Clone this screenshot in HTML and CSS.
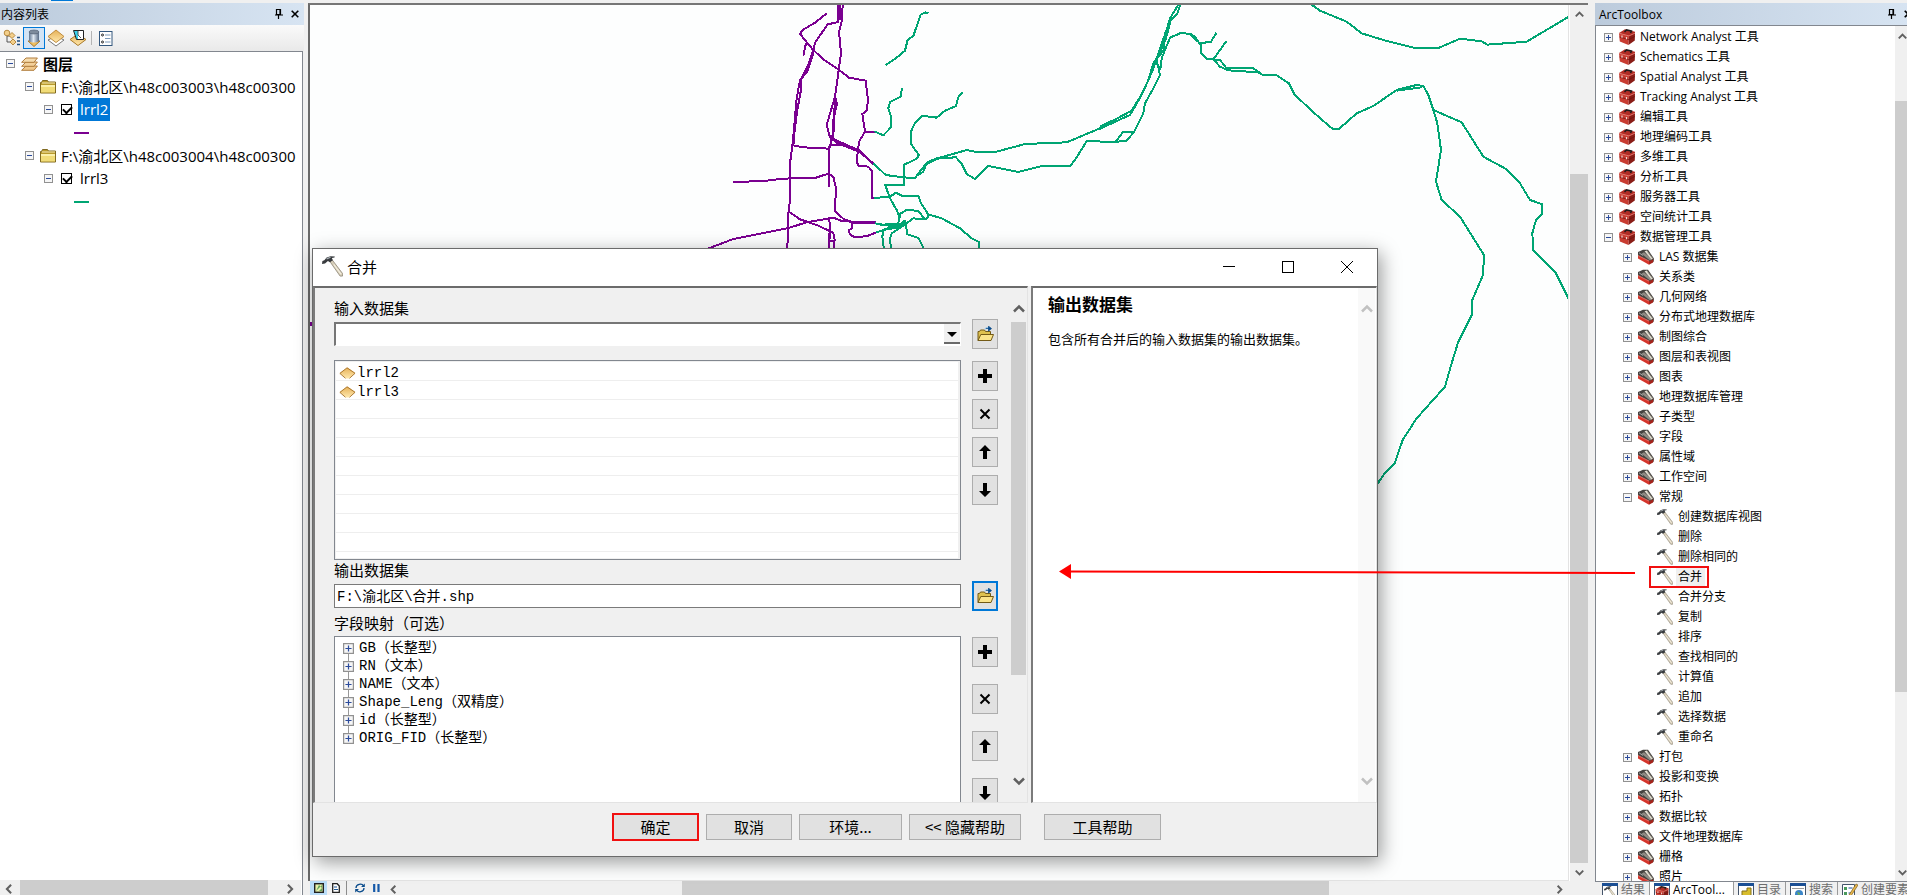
FILE: index.html
```html
<!DOCTYPE html>
<html lang="zh-CN">
<head>
  <meta charset="UTF-8">
  <meta name="viewport" content="width=device-width, initial-scale=1">
  <title>合并</title>
  <link rel="stylesheet" href="styles.css">
</head>

<body>
  <!-- shared icons -->
  <svg class="sprite" aria-hidden="true">
    <defs>
      <linearGradient id="gold" x1="0" y1="0" x2="0" y2="1">
        <stop offset="0" stop-color="#e6b056"/><stop offset="1" stop-color="#ffe9ae"/>
      </linearGradient>
      <linearGradient id="steel" x1="0" y1="0" x2="1" y2="0">
        <stop offset="0" stop-color="#5f7590"/><stop offset=".45" stop-color="#dfe8f2"/><stop offset="1" stop-color="#566a84"/>
      </linearGradient>
    </defs>
    <symbol id="i-plus" viewBox="0 0 9 9">
      <rect x=".5" y=".5" width="8" height="8" fill="#f6f6f6" stroke="#919191"/>
      <path d="M2 4.500h5M4.500 2v5" stroke="#2b4b9b"/>
    </symbol>
    <symbol id="i-minus" viewBox="0 0 9 9">
      <rect x=".5" y=".5" width="8" height="8" fill="#f6f6f6" stroke="#919191"/>
      <path d="M2 4.500h5" stroke="#2b4b9b"/>
    </symbol>
    <symbol id="i-toolbox" viewBox="0 0 16 16">
      <path d="M0 4 10 6.500 9.500 16 .8 12.500z" fill="#c93c31"/>
      <path d="M10 6.500 16 4 15.800 11.500 9.500 16z" fill="#8a1d17"/>
      <path d="M0 4 6 .3 16 2.800 16 4.200 10 7z" fill="#b02c24"/>
      <path d="M0 4.300 10 6.900 16 4.200" fill="none" stroke="#e98076" stroke-width=".8"/>
      <path d="M.5 8 9.800 10.600 15.800 7.500" fill="none" stroke="#6e1410" stroke-width=".8"/>
      <path d="M5.500 3 7.500.9 12.500 2 11.500 4" fill="none" stroke="#1c1c1c" stroke-width="1.500"/>
      <path d="M3 6.500v2.200M7.500 8v2.200" stroke="#f1d9d3" stroke-width="1.200"/>
    </symbol>
    <symbol id="i-toolset" viewBox="0 0 16 16">
      <path d="M0 3 5 .8 10 .8 16 9.500 15.500 13 11 14 0 7z" fill="#45423f"/>
      <path d="M3.500 4.800 6 3.200 14 10 12 11.500z" fill="#8f8b84"/>
      <path d="M6.500 2.200 9 1.500 15 9.500 13.500 10.500z" fill="#e4dfd2"/>
      <path d="M9.500 2.500 14.800 9.500" stroke="#6a645b" stroke-width=".8"/>
      <path d="M1 3.800 5 6.500" stroke="#bbb" stroke-width=".8"/>
      <path d="M0 6.500 11 12 11 15.800 0 9.500z" fill="#d5352b"/>
      <path d="M11 12 15.500 10.500 15 13.500 11 15.800z" fill="#a5241c"/>
      <path d="M0 6.500 11 12" stroke="#ee8074" stroke-width=".8"/>
    </symbol>
    <symbol id="i-hammer" viewBox="0 0 16 16">
      <path d="M6 4.200 7.800 3 15.800 13.500 15.600 15.300 13.800 15.300z" fill="#d8cfba" stroke="#8b8373" stroke-width=".6"/>
      <path d="M9 6.500 14.500 13.800" stroke="#f6f1e2" stroke-width=".8"/>
      <path d="M0 6 .3 3.800 1.800 3.200 3.500 1.200 6.500.2 9.800.4 9.500 1.200 7.500 1.600 8.300 3.200 6 4.800 4.500 3.800 2.300 5.800z" fill="#383b3e"/>
      <path d="M3.500 2.200 6.500 1" stroke="#a9b0b6" stroke-width=".9"/>
    </symbol>
    <symbol id="i-folder" viewBox="0 0 16 14">
      <path d="M.5 2.500h1l1-2h5l1 1.500h7v11H.5z" fill="#b99a2c" stroke="#806a22"/>
      <path d="M1 5h14v7.500H1z" fill="#f1dc78"/>
      <path d="M1 5h14v2H1z" fill="#fbf0ac"/>
      <path d="M2 3h13" stroke="#f7ecb8"/>
    </symbol>
    <symbol id="i-open" viewBox="0 0 17 16">
      <path d="M1 14.500V5.500h1.500l1-1.500h4l1 1.500h5V8" fill="#dfc14e" stroke="#735a16"/>
      <path d="M1 14.500 3.800 8.500h12.700L14 14.500z" fill="#fbe48a" stroke="#735a16"/>
      <path d="M8 3.500c0-2 2-2 4-1.500" fill="none" stroke="#7db7e4"/>
      <path d="M9 2.500h4M11.500.2 14.500 2.600 11.500 5z" fill="#0b4c8c" stroke="#0b4c8c" stroke-width=".8"/>
    </symbol>
    <symbol id="i-diamond" viewBox="0 0 17 12">
      <path d="M8.500.5 16.500 6 10 11.500H7L.5 6z" fill="url(#gold)"/>
      <path d="M.8 6.500 8 .8 16 6.300 10.500 11.300M1 6.500 6.500 11.300" fill="none" stroke="#a57029" stroke-width=".9"/>
    </symbol>
    <symbol id="i-add" viewBox="0 0 14 14"><path d="M5 0h4v5h5v4H9v5H5V9H0V5h5z"/></symbol>
    <symbol id="i-del" viewBox="0 0 14 14"><path d="M2.500 2.500 11.500 11.500M11.500 2.500 2.500 11.500" stroke="#000" stroke-width="2"/></symbol>
    <symbol id="i-up" viewBox="0 0 14 14"><path d="M7 0 13 6H9v8H5V6H1z"/></symbol>
    <symbol id="i-down" viewBox="0 0 14 14"><path d="M7 14 1 8h4V0h4v8h4z"/></symbol>
    <symbol id="i-chev-up" viewBox="0 0 12 12"><path d="M1 8.500 6 3.500 11 8.500" fill="none" stroke="currentColor" stroke-width="2.500"/></symbol>
    <symbol id="i-chev-down" viewBox="0 0 12 12"><path d="M1 3.500 6 8.500 11 3.500" fill="none" stroke="currentColor" stroke-width="2.500"/></symbol>
    <symbol id="i-chev-left" viewBox="0 0 12 12"><path d="M8.500 1 3.500 6 8.500 11" fill="none" stroke="currentColor" stroke-width="2.500"/></symbol>
    <symbol id="i-chev-right" viewBox="0 0 12 12"><path d="M3.500 1 8.500 6 3.500 11" fill="none" stroke="currentColor" stroke-width="2.500"/></symbol>
    <symbol id="i-pin" viewBox="0 0 8 10"><path d="M1.500.5h4v5h-4zM5 .5v5M0 6h8M3.500 6v4" fill="none" stroke="#000" stroke-width="1.200"/></symbol>
    <symbol id="i-close" viewBox="0 0 8 8"><path d="M.7.7 7.300 7.300M7.300.7.7 7.300" stroke="#000" stroke-width="1.600"/></symbol>
  </svg>

  <div class="topstrip"><span class="topmark"></span></div>

  <div class="workspace">
    <aside class="contents">
      <header class="panel-title">
        <h2>内容列表</h2>
        <button type="button" aria-label="自动隐藏"><svg width="8" height="10"><use href="#i-pin"/></svg></button>
        <button type="button" aria-label="关闭"><svg width="8" height="8"><use href="#i-close"/></svg></button>
      </header>
      <div class="contents-tools">
        <button type="button" aria-label="按绘制顺序列出">
          <svg width="18" height="18" viewBox="0 0 18 18">
            <path d="M4 4v9h6M4 7h6" fill="none" stroke="#555"/>
            <circle cx="4" cy="4" r="2.800" fill="#f3cf8a" stroke="#b88a40"/>
            <path d="M9 3.500 12 6.500 9 9.500 6 6.500zM10 10 13 13 10 16 7 13z" fill="#f3cf8a" stroke="#b88a40"/>
            <path d="M14 8.500h3M14 12h3M14 15.500h3" stroke="#1f4d80" stroke-width="1.500"/>
          </svg>
        </button>
        <button type="button" class="on" aria-label="按源列出">
          <svg width="16" height="18" viewBox="0 0 16 18">
            <path d="M2 12h12l-6 5.500z" fill="#f0c060" stroke="#a87828"/>
            <path d="M3 3v9c2 2 8 2 10 0V3z" fill="url(#steel)"/>
            <ellipse cx="8" cy="3" rx="5" ry="2" fill="#7d8b9c" stroke="#566478" stroke-width=".7"/>
          </svg>
        </button>
        <button type="button" aria-label="按可见性列出">
          <svg width="18" height="18" viewBox="0 0 18 18">
            <path d="M1 11 9 17 17 11 9 7z" fill="#fff" stroke="#777"/>
            <path d="M9 1 17 7.500 9 13.500 1 7.500z" fill="url(#gold)" stroke="#c08c3c"/>
          </svg>
        </button>
        <button type="button" aria-label="按选择列出">
          <svg width="18" height="18" viewBox="0 0 18 18">
            <path d="M1 10.500 9 5l8 5.500-8 6z" fill="url(#gold)" stroke="#a87828"/>
            <path d="M4.500 1.500h10v9h-7z" fill="#39d0ea" stroke="#222"/>
            <path d="M9 2h5v8H9z" fill="#fff"/><path d="M9 2v4l3 3" fill="none" stroke="#555"/>
          </svg>
        </button>
        <span class="divider"></span>
        <button type="button" aria-label="选项">
          <svg width="14" height="15" viewBox="0 0 14 15">
            <rect x=".5" y=".5" width="12.500" height="14" fill="#fff" stroke="#34587e"/>
            <path d="M6 4h5.500M6 7.500h5.500M6 11h5.500" stroke="#7d99b8"/>
            <circle cx="3.500" cy="4" r="1" fill="none" stroke="#222"/><circle cx="3.500" cy="11" r="1" fill="none" stroke="#222"/>
          </svg>
        </button>
      </div>
      <div class="contents-body">
        <ul class="layers">
          <li class="group"><svg width="9" height="9"><use href="#i-minus"/></svg>
            <svg width="17" height="14" viewBox="0 0 17 14">
              <path d="M.6 13.300 5 9h11.400L13 13.300z" fill="#f0c88c" stroke="#b17d3c"/>
              <path d="M.6 9.300 5 5h11.400L13 9.300z" fill="#f3d09a" stroke="#b17d3c"/>
              <path d="M.6 5.300 5 1h11.400L13 5.300z" fill="#f6dcae" stroke="#b17d3c"/>
            </svg><span>图层</span></li>
          <li class="source"><svg width="9" height="9"><use href="#i-minus"/></svg><svg width="16" height="14"><use href="#i-folder"/></svg><span>F:\渝北区\h48c003003\h48c00300</span></li>
          <li class="layer"><svg width="9" height="9"><use href="#i-minus"/></svg><input type="checkbox" id="lrrl2" checked><label class="selected" for="lrrl2">lrrl2</label></li>
          <li class="legend"><span class="line purple"></span></li>
          <li class="source"><svg width="9" height="9"><use href="#i-minus"/></svg><svg width="16" height="14"><use href="#i-folder"/></svg><span>F:\渝北区\h48c003004\h48c00300</span></li>
          <li class="layer"><svg width="9" height="9"><use href="#i-minus"/></svg><input type="checkbox" id="lrrl3" checked><label for="lrrl3">lrrl3</label></li>
          <li class="legend"><span class="line green"></span></li>
        </ul>
        <div class="hscroll">
          <svg width="10" height="10"><use href="#i-chev-left"/></svg>
          <span class="thumb"></span>
          <svg width="10" height="10"><use href="#i-chev-right"/></svg>
        </div>
      </div>
    </aside>

    <main class="map">
      <div class="map-view">
        <svg class="roads" viewBox="310 5 1258 875" preserveAspectRatio="xMinYMin slice">
          <path d="M310 324h3" stroke="#7a0090" stroke-width="4"/>
          <g class="purple-roads" transform="translate(700 0) scale(.33333)">
            <path d="M415 14V66L383 73 345 128 337 170 322 215 300 240 290 295 278 430 270 490 270 600 265 640 262 750"/>
            <path d="M420 14V60M428 14 426 60 417 95 423 160 412 240 405 290 400 410 388 440 386 562"/>
            <path d="M380 40 345 68 308 90 300 102 338 148 370 178 415 208 447 233 497 242 504 300 500 332 487 342 495 395 477 425 470 485 475 497 505 500 515 512 515 594 525 594"/>
            <path d="M495 395H525M318 130 310 167M340 150 325 195 302 240 302 275 292 330 283 400 280 438"/>
            <path d="M405 290 380 375 390 412 410 428 477 455 522 492"/>
            <path d="M405 290 411 310 400 360 398 415 435 433 480 452 520 492M392 405 392 435 430 435"/>
            <path d="M280 436 310 442 388 446 392 432M100 547 215 541 240 536 345 534 385 521 400 530 407 560 406 635 432 658 455 665 527 667"/>
            <path d="M268 636 300 658 350 675 400 698 404 720 400 748M18 748 100 717 265 684 320 667 400 653 425 663 455 665M455 670H527"/>
            <path d="M388 655 390 700 386 748M388 700V722H402V745M455 667 457 685 447 690 449 703 463 711 500 709 527 698"/>
          </g>
          <g class="green-roads" transform="translate(700 0) scale(.33333)">
            <path d="M685 40 677 37 662 44 640 108 623 120 615 152 590 173 557 195M606 265 602 290 570 306 565 325 573 350 573 382 550 406 523 394"/>
            <path d="M788 275 775 292 768 318 735 332 710 353 667 347 645 368 633 395 633 432 657 465 650 476 613 494 613 554 556 556 570 595 590 630 600 655"/>
            <path d="M520 490 557 525 610 532 645 534 675 495 720 473 800 450 830 456 890 455 975 432 1100 427 1200 385"/>
            <path d="M650 527 670 515 680 488 710 475 768 472 785 492 800 522 825 537 865 498 955 516 1025 498 1110 498 1125 480 1160 424 1200 423"/>
            <path d="M523 594 570 590 588 578 605 587 655 588 663 610 682 638 685 652 675 658 655 633 620 629 600 642 595 670 550 692 547 710 552 748"/>
            <path d="M682 642 725 655 780 685 815 715 838 727V748M675 658 640 655 605 680 575 700 570 715 573 748M615 660 622 703 655 714 673 748"/>
            <path d="M525 670 560 676 600 680 615 660M527 698 555 688 590 684 610 665M540 674 600 672"/>
          </g>
          <g class="green-roads" transform="translate(1100 0) scale(.33333)">
            <path d="M235 14 210 55 200 90 180 145 158 210 130 275 95 332 50 356 0 380M241 14 232 40 212 62 198 115 170 180 180 225 160 265 135 310 130 340 102 396 78 424 0 426"/>
            <path d="M195 95 192 150 160 190 145 240 122 290 90 345 0 386M48 424 68 397H102M170 190 182 210M182 205 185 175 210 113 245 98 270 103 300 130 333 125 349 99"/>
            <path d="M270 101 285 110 302 135 303 160 320 177 340 178 380 122M340 178 360 180 380 205 460 205 487 224 530 226 567 250 583 283 620 318 655 350 697 386 718 386 770 340 820 318 890 270 950 255 970 258 985 285 1000 330 1012 370 1023 450 1008 545 1025 600 1080 650 1152 765 1149 825 1117 900 1115 945 1075 1025 1055 1090 1035 1160 950 1255 908 1320 885 1388 855 1418 830 1455"/>
            <path d="M340 178 360 200 385 211 475 217 487 224M890 272 965 262"/>
            <path d="M1000 330 1085 367 1150 470 1220 508 1260 550 1290 600 1325 612 1327 640 1308 660 1297 700 1300 750 1365 815 1405 895"/>
            <path d="M635 14 660 32 740 65 785 100 850 120 945 144H1015L1080 116 1145 124 1162 134 1280 125 1405 51"/>
          </g>
        </svg>
        <div class="vscroll">
          <svg width="9" height="9"><use href="#i-chev-up"/></svg>
          <div class="track"><span class="thumb"></span></div>
          <svg width="9" height="9"><use href="#i-chev-down"/></svg>
        </div>
      </div>
      <div class="map-bar">
        <button type="button" class="on" aria-label="数据视图"><svg width="10" height="10" viewBox="0 0 10 10"><rect x=".7" y=".7" width="8.600" height="8.600" fill="#e7f0a8" stroke="#222" stroke-width="1.400"/><path d="M2 8 5 2 8 5V2M5 8 8 5v3z" fill="#5fa35a"/></svg></button>
        <button type="button" aria-label="布局视图"><svg width="8" height="10" viewBox="0 0 8 10"><path d="M.7.7h4.500L7.300 3v6.300H.7z" fill="#fff" stroke="#222" stroke-width="1.300"/><path d="M2 4h3M2 6.500h4" stroke="#1c5796"/></svg></button>
        <span class="divider"></span>
        <button type="button" aria-label="刷新"><svg width="10" height="10" viewBox="0 0 10 10"><path d="M1 5C1 1 7 0 8.500 3M9 5C9 9 3 10 1.500 7" fill="none" stroke="#0b4c8c" stroke-width="1.300"/><path d="M9.800.5V4H6zM.2 9.500V6H4z" fill="#0b4c8c"/></svg></button>
        <button type="button" aria-label="暂停"><svg width="7" height="8" viewBox="0 0 7 8"><path d="M1.200 0v8M5.500 0v8" stroke="#1559a8" stroke-width="2.200"/></svg></button>
        <div class="hscroll">
          <svg width="9" height="9"><use href="#i-chev-left"/></svg>
          <span class="thumb"></span>
          <svg width="9" height="9"><use href="#i-chev-right"/></svg>
        </div>
      </div>

      <section class="dialog" role="dialog" aria-labelledby="dialog-title">
        <header class="dialog-title">
          <svg width="21" height="21"><use href="#i-hammer"/></svg>
          <h1 id="dialog-title">合并</h1>
          <button type="button" aria-label="最小化"><svg width="12" height="12"><path d="M0 5.500h12" stroke="#000"/></svg></button>
          <button type="button" aria-label="最大化"><svg width="12" height="12"><rect x=".5" y=".5" width="11" height="11" fill="none" stroke="#000"/></svg></button>
          <button type="button" aria-label="关闭"><svg width="12" height="12"><path d="M0 0 12 12M12 0 0 12" stroke="#000"/></svg></button>
        </header>
        <div class="panes">
          <form class="pane params">
            <div class="fields">
              <label for="in-data">输入数据集</label>
              <div class="field">
                <div class="combo"><select id="in-data"><option></option></select><span class="combo-arrow"></span></div>
                <button type="button" class="sq" aria-label="浏览"><svg width="17" height="16"><use href="#i-open"/></svg></button>
              </div>
              <div class="field inputs">
                <ul class="datasets">
                  <li><svg width="17" height="12"><use href="#i-diamond"/></svg>lrrl2</li>
                  <li><svg width="17" height="12"><use href="#i-diamond"/></svg>lrrl3</li>
                </ul>
                <div class="sqs">
                  <button type="button" class="sq" aria-label="添加"><svg width="14" height="14"><use href="#i-add"/></svg></button>
                  <button type="button" class="sq" aria-label="移除"><svg width="14" height="14"><use href="#i-del"/></svg></button>
                  <button type="button" class="sq" aria-label="上移"><svg width="14" height="14"><use href="#i-up"/></svg></button>
                  <button type="button" class="sq" aria-label="下移"><svg width="14" height="14"><use href="#i-down"/></svg></button>
                </div>
              </div>
              <label for="out-data">输出数据集</label>
              <div class="field">
                <input type="text" id="out-data" value="F:\渝北区\合并.shp">
                <button type="button" class="sq focus" aria-label="浏览"><svg width="17" height="16"><use href="#i-open"/></svg></button>
              </div>
              <p class="caption">字段映射（可选）</p>
              <div class="field mapping">
                <ul class="fieldmap">
                  <li><svg width="11" height="11"><use href="#i-plus"/></svg>GB（长整型）</li>
                  <li><svg width="11" height="11"><use href="#i-plus"/></svg>RN（文本）</li>
                  <li><svg width="11" height="11"><use href="#i-plus"/></svg>NAME（文本）</li>
                  <li><svg width="11" height="11"><use href="#i-plus"/></svg>Shape_Leng（双精度）</li>
                  <li><svg width="11" height="11"><use href="#i-plus"/></svg>id（长整型）</li>
                  <li><svg width="11" height="11"><use href="#i-plus"/></svg>ORIG_FID（长整型）</li>
                </ul>
                <div class="sqs">
                  <button type="button" class="sq" aria-label="添加"><svg width="14" height="14"><use href="#i-add"/></svg></button>
                  <button type="button" class="sq" aria-label="移除"><svg width="14" height="14"><use href="#i-del"/></svg></button>
                  <button type="button" class="sq" aria-label="上移"><svg width="14" height="14"><use href="#i-up"/></svg></button>
                  <button type="button" class="sq" aria-label="下移"><svg width="14" height="14"><use href="#i-down"/></svg></button>
                </div>
              </div>
            </div>
            <div class="vscroll">
              <svg width="12" height="12"><use href="#i-chev-up"/></svg>
              <div class="track"><span class="thumb"></span></div>
              <svg width="12" height="12"><use href="#i-chev-down"/></svg>
            </div>
          </form>
          <div class="pane help">
            <div class="help-text">
              <h2>输出数据集</h2>
              <p>包含所有合并后的输入数据集的输出数据集。</p>
            </div>
            <div class="vscroll off">
              <svg width="12" height="12"><use href="#i-chev-up"/></svg>
              <div class="track"></div>
              <svg width="12" height="12"><use href="#i-chev-down"/></svg>
            </div>
          </div>
        </div>
        <footer class="actions">
          <button type="button" class="ok">确定</button>
          <button type="button" class="cancel">取消</button>
          <button type="button" class="env">环境...</button>
          <button type="button" class="hide-help">&lt;&lt; 隐藏帮助</button>
          <button type="button" class="tool-help">工具帮助</button>
        </footer>
      </section>
    </main>

    <aside class="toolbox">
      <header class="panel-title">
        <h2>ArcToolbox</h2>
        <button type="button" aria-label="自动隐藏"><svg width="8" height="10"><use href="#i-pin"/></svg></button>
        <button type="button" aria-label="关闭"><svg width="8" height="8"><use href="#i-close"/></svg></button>
      </header>
      <div class="toolbox-body">
        <ul class="tools">
          <li><svg class="ex"><use href="#i-plus"/></svg><svg class="ic"><use href="#i-toolbox"/></svg><span>Network Analyst 工具</span></li>
          <li><svg class="ex"><use href="#i-plus"/></svg><svg class="ic"><use href="#i-toolbox"/></svg><span>Schematics 工具</span></li>
          <li><svg class="ex"><use href="#i-plus"/></svg><svg class="ic"><use href="#i-toolbox"/></svg><span>Spatial Analyst 工具</span></li>
          <li><svg class="ex"><use href="#i-plus"/></svg><svg class="ic"><use href="#i-toolbox"/></svg><span>Tracking Analyst 工具</span></li>
          <li><svg class="ex"><use href="#i-plus"/></svg><svg class="ic"><use href="#i-toolbox"/></svg><span>编辑工具</span></li>
          <li><svg class="ex"><use href="#i-plus"/></svg><svg class="ic"><use href="#i-toolbox"/></svg><span>地理编码工具</span></li>
          <li><svg class="ex"><use href="#i-plus"/></svg><svg class="ic"><use href="#i-toolbox"/></svg><span>多维工具</span></li>
          <li><svg class="ex"><use href="#i-plus"/></svg><svg class="ic"><use href="#i-toolbox"/></svg><span>分析工具</span></li>
          <li><svg class="ex"><use href="#i-plus"/></svg><svg class="ic"><use href="#i-toolbox"/></svg><span>服务器工具</span></li>
          <li><svg class="ex"><use href="#i-plus"/></svg><svg class="ic"><use href="#i-toolbox"/></svg><span>空间统计工具</span></li>
          <li><svg class="ex"><use href="#i-minus"/></svg><svg class="ic"><use href="#i-toolbox"/></svg><span>数据管理工具</span></li>
          <li class="set"><svg class="ex"><use href="#i-plus"/></svg><svg class="ic"><use href="#i-toolset"/></svg><span>LAS 数据集</span></li>
          <li class="set"><svg class="ex"><use href="#i-plus"/></svg><svg class="ic"><use href="#i-toolset"/></svg><span>关系类</span></li>
          <li class="set"><svg class="ex"><use href="#i-plus"/></svg><svg class="ic"><use href="#i-toolset"/></svg><span>几何网络</span></li>
          <li class="set"><svg class="ex"><use href="#i-plus"/></svg><svg class="ic"><use href="#i-toolset"/></svg><span>分布式地理数据库</span></li>
          <li class="set"><svg class="ex"><use href="#i-plus"/></svg><svg class="ic"><use href="#i-toolset"/></svg><span>制图综合</span></li>
          <li class="set"><svg class="ex"><use href="#i-plus"/></svg><svg class="ic"><use href="#i-toolset"/></svg><span>图层和表视图</span></li>
          <li class="set"><svg class="ex"><use href="#i-plus"/></svg><svg class="ic"><use href="#i-toolset"/></svg><span>图表</span></li>
          <li class="set"><svg class="ex"><use href="#i-plus"/></svg><svg class="ic"><use href="#i-toolset"/></svg><span>地理数据库管理</span></li>
          <li class="set"><svg class="ex"><use href="#i-plus"/></svg><svg class="ic"><use href="#i-toolset"/></svg><span>子类型</span></li>
          <li class="set"><svg class="ex"><use href="#i-plus"/></svg><svg class="ic"><use href="#i-toolset"/></svg><span>字段</span></li>
          <li class="set"><svg class="ex"><use href="#i-plus"/></svg><svg class="ic"><use href="#i-toolset"/></svg><span>属性域</span></li>
          <li class="set"><svg class="ex"><use href="#i-plus"/></svg><svg class="ic"><use href="#i-toolset"/></svg><span>工作空间</span></li>
          <li class="set"><svg class="ex"><use href="#i-minus"/></svg><svg class="ic"><use href="#i-toolset"/></svg><span>常规</span></li>
          <li class="tool"><svg class="ic"><use href="#i-hammer"/></svg><span>创建数据库视图</span></li>
          <li class="tool"><svg class="ic"><use href="#i-hammer"/></svg><span>删除</span></li>
          <li class="tool"><svg class="ic"><use href="#i-hammer"/></svg><span>删除相同的</span></li>
          <li class="tool marked"><svg class="ic"><use href="#i-hammer"/></svg><span>合并</span></li>
          <li class="tool"><svg class="ic"><use href="#i-hammer"/></svg><span>合并分支</span></li>
          <li class="tool"><svg class="ic"><use href="#i-hammer"/></svg><span>复制</span></li>
          <li class="tool"><svg class="ic"><use href="#i-hammer"/></svg><span>排序</span></li>
          <li class="tool"><svg class="ic"><use href="#i-hammer"/></svg><span>查找相同的</span></li>
          <li class="tool"><svg class="ic"><use href="#i-hammer"/></svg><span>计算值</span></li>
          <li class="tool"><svg class="ic"><use href="#i-hammer"/></svg><span>追加</span></li>
          <li class="tool"><svg class="ic"><use href="#i-hammer"/></svg><span>选择数据</span></li>
          <li class="tool"><svg class="ic"><use href="#i-hammer"/></svg><span>重命名</span></li>
          <li class="set"><svg class="ex"><use href="#i-plus"/></svg><svg class="ic"><use href="#i-toolset"/></svg><span>打包</span></li>
          <li class="set"><svg class="ex"><use href="#i-plus"/></svg><svg class="ic"><use href="#i-toolset"/></svg><span>投影和变换</span></li>
          <li class="set"><svg class="ex"><use href="#i-plus"/></svg><svg class="ic"><use href="#i-toolset"/></svg><span>拓扑</span></li>
          <li class="set"><svg class="ex"><use href="#i-plus"/></svg><svg class="ic"><use href="#i-toolset"/></svg><span>数据比较</span></li>
          <li class="set"><svg class="ex"><use href="#i-plus"/></svg><svg class="ic"><use href="#i-toolset"/></svg><span>文件地理数据库</span></li>
          <li class="set"><svg class="ex"><use href="#i-plus"/></svg><svg class="ic"><use href="#i-toolset"/></svg><span>栅格</span></li>
          <li class="set"><svg class="ex"><use href="#i-plus"/></svg><svg class="ic"><use href="#i-toolset"/></svg><span>照片</span></li>
        </ul>
        <div class="vscroll">
          <svg width="9" height="9"><use href="#i-chev-up"/></svg>
          <div class="track"><span class="thumb"></span></div>
          <svg width="9" height="9"><use href="#i-chev-down"/></svg>
        </div>
      </div>
      <nav class="tabs">
        <button type="button"><svg width="16" height="16" viewBox="0 0 16 16"><path d="M.5.5h15v15H.5z" fill="#fff" stroke="#44546a"/><path d="M0 0h16v3H0z" fill="#1b4f94"/><use href="#i-hammer" x="2" y="3" width="12" height="12"/></svg>结果</button>
        <button type="button" class="current"><svg width="16" height="16" viewBox="0 0 16 16"><path d="M.5.5h15v15H.5z" fill="#fff" stroke="#44546a"/><path d="M0 0h16v3H0z" fill="#1b4f94"/><use href="#i-toolbox" x="1" y="3" width="14" height="13"/></svg>ArcTool...</button>
        <button type="button"><svg width="16" height="16" viewBox="0 0 16 16"><path d="M.5.5h15v15H.5z" fill="#fff" stroke="#44546a"/><path d="M0 0h16v3H0z" fill="#1b4f94"/><path d="M4 8h5V5h4v9H4z" fill="#d8bd2c" stroke="#85711a"/></svg>目录</button>
        <button type="button"><svg width="16" height="16" viewBox="0 0 16 16"><path d="M.5.5h15v15H.5z" fill="#fff" stroke="#44546a"/><path d="M0 0h16v3H0z" fill="#1b4f94"/><path d="M2 5.500h12" stroke="#999"/><circle cx="9" cy="11" r="4" fill="#3b86c8"/><path d="M7 9l3 1-1 3z" fill="#6fb04a"/></svg>搜索</button>
        <button type="button"><svg width="16" height="16" viewBox="0 0 16 16"><path d="M.5 1.500h12v14H.5z" fill="#fff" stroke="#44546a"/><path d="M2 4h3v3H2zM2 9h3v3H2z" fill="#4a9a5c"/><path d="M6.500 5h4M6.500 10h3" stroke="#1b4f94"/><path d="M7 12 14 1l2 1-7 11z" fill="#e8b84c" stroke="#7b5a1c" stroke-width=".7"/></svg>创建要素</button>
      </nav>
    </aside>
  </div>

  <!-- callout from the tool to its window -->
  <svg class="callout" width="578" height="20" viewBox="0 0 578 20">
    <path d="M8 8.500 577 10" stroke="#f00" stroke-width="2"/>
    <path d="M1 8.500 13 1v15z" fill="#f00"/>
  </svg>
</body>
</html>
```

FILE: styles.css
```css
* {
  box-sizing: border-box;
}
body {
  margin: 0;
  height: 100vh;
  display: flex;
  flex-direction: column;
  position: relative;
  overflow: hidden;
  background: #f0f0f0;
  color: #000;
  font-family: "Open Sans", "Noto Sans CJK SC", sans-serif;
  font-size: 12px;
}
h1, h2, p, ul {
  margin: 0;
  padding: 0;
  font-size: inherit;
  font-weight: normal;
}
ul {
  list-style: none;
}
button {
  margin: 0;
  padding: 0;
  border: 0;
  background: none;
  font: inherit;
  color: inherit;
}
svg {
  display: block;
  flex: none;
}
.sprite {
  position: absolute;
  width: 0;
  height: 0;
}
.topstrip {
  flex: none;
  height: 3px;
  padding-left: 51px;
}
.topmark {
  display: block;
  width: 22px;
  height: 1px;
  background: #0078d7;
}
.workspace {
  flex: 1;
  min-height: 0;
  display: flex;
}

/* docked panels */
.panel-title {
  flex: none;
  display: flex;
  align-items: center;
  gap: 8px;
  height: 22px;
  padding: 0 5px 0 1px;
  background: linear-gradient(90deg, #bccbdc, #d7e4f2);
}
.panel-title h2 {
  flex: 1;
}
.contents {
  flex: none;
  width: 304px;
  display: flex;
  flex-direction: column;
}
.contents-tools {
  flex: none;
  display: flex;
  align-items: center;
  height: 26px;
  padding-left: 1px;
  background: linear-gradient(#fafafa, #e9e9e9);
}
.contents-tools button {
  display: flex;
  align-items: center;
  justify-content: center;
  width: 22px;
  height: 22px;
}
.contents-tools .on {
  border: 1px solid #0078d7;
  background: #d3e4f5;
}
.contents-tools .divider {
  width: 1px;
  height: 14px;
  margin: 0 3px 0 2px;
  background: #b5b5b5;
}
.contents-body {
  flex: 1;
  min-height: 0;
  display: flex;
  flex-direction: column;
  margin-right: 1px;
  border: solid #82878f;
  border-width: 1px 1px 0 0;
  background: #fff;
}
.layers {
  flex: 1;
  font-size: 15px;
  overflow: hidden;
}
.layers li {
  display: flex;
  align-items: center;
  height: 23px;
  white-space: nowrap;
}
.layers .group {
  padding-left: 6px;
  gap: 6px;
  font-weight: bold;
}
.layers .group span {
  margin-left: -1px;
}
.layers .source {
  padding-left: 25px;
  gap: 6px;
}
.layers .source span {
  margin-left: -1px;
}
.layers .layer {
  padding-left: 44px;
}
.layers input {
  appearance: none;
  width: 11px;
  height: 11px;
  margin: 0 6px 0 8px;
  border: 1px solid #000;
  background: #fff;
}
.layers input:checked::after {
  content: "";
  display: block;
  width: 7px;
  height: 4px;
  margin: 1px;
  border: solid #000;
  border-width: 0 0 2px 2px;
  transform: rotate(-45deg);
}
.layers label {
  padding: 0 2px;
  line-height: 23px;
}
.layers .selected {
  background: #0078d7;
  color: #fff;
}
.legend {
  padding-left: 74px;
}
.line {
  width: 15px;
  height: 2px;
}
.purple {
  background: #7a0090;
}
.green {
  background: #00a573;
}

/* scroll bars */
.hscroll {
  display: flex;
  align-items: center;
  color: #606060;
}
.thumb {
  display: block;
  background: #cdcdcd;
}
.contents .hscroll {
  flex: none;
  height: 15px;
  padding: 3px 6px 0 4px;
  gap: 6px;
  margin-right: 1px;
  background: #f0f0f0;
}
.contents .hscroll .thumb {
  flex: 1;
  align-self: stretch;
  margin: -3px 11px 0 0;
}
.vscroll {
  flex: none;
  display: flex;
  flex-direction: column;
  align-items: center;
  background: #f0f0f0;
  color: #606060;
}
.track {
  flex: 1;
  align-self: stretch;
  display: flex;
  flex-direction: column;
}

/* map */
.map {
  flex: 1;
  min-width: 0;
  position: relative;
  display: flex;
  flex-direction: column;
  margin: 0 7px 0 4px;
}
.map-view {
  flex: 1;
  min-height: 0;
  display: flex;
  border: solid #696969;
  border-width: 2px 0 0 2px;
  border-top-color: #767676;
}
.roads {
  flex: 1;
  min-width: 0;
  height: 100%;
  background: #fdfefe;
  border: solid #e3e3e3;
  border-width: 0 1px 1px 0;
}
.roads path {
  fill: none;
  shape-rendering: crispEdges;
}
.purple-roads {
  stroke: #7a0090;
  stroke-width: 6;
}
.green-roads {
  stroke: #00a573;
  stroke-width: 6;
}
.map-view .vscroll {
  width: 19px;
  padding: 5px 0 4px;
  border-left: 1px solid #fff;
}
.map-view .track {
  padding: 155px 0 5px;
}
.map-view .thumb {
  flex: 1;
}
.map-bar {
  flex: none;
  display: flex;
  align-items: center;
  height: 14px;
  padding: 0 24px 0 2px;
}
.map-bar button {
  display: flex;
  align-items: center;
  justify-content: center;
  width: 17px;
  height: 14px;
}
.map-bar .on {
  background: #b9dcf7;
}
.map-bar .divider {
  width: 1px;
  height: 14px;
  margin: 0 4px 0 2px;
  background: #8c8c8c;
}
.map-bar .hscroll {
  flex: 1;
  align-self: stretch;
  margin-left: 4px;
  padding-top: 3px;
  justify-content: space-between;
}
.map-bar .thumb {
  align-self: stretch;
  width: 55%;
  margin: -3px 0 0 58px;
}

/* tool window */
.dialog {
  position: absolute;
  left: 4px;
  top: 245px;
  width: 1066px;
  height: 609px;
  display: flex;
  flex-direction: column;
  border: 1px solid #6b6b6b;
  background: #f0f0f0;
  box-shadow: 3px 5px 18px rgba(0, 0, 0, .4);
  font-family: "Noto Sans CJK SC", sans-serif;
  font-size: 15px;
}
.dialog-title {
  flex: none;
  display: flex;
  align-items: center;
  height: 37px;
  padding: 0 1px 2px 9px;
  background: #fff;
}
.dialog-title h1 {
  flex: 1;
  padding-left: 4px;
}
.dialog-title button {
  display: flex;
  align-items: center;
  justify-content: center;
  width: 59px;
  height: 35px;
}
.panes {
  flex: 1;
  min-height: 0;
  display: flex;
  gap: 3px;
}
.pane {
  display: flex;
  border: solid #e3e3e3;
  border-width: 2px 1px 1px 2px;
  border-top-color: #6b6b6b;
  border-left-color: #7b7b7b;
  overflow: hidden;
}
.params {
  flex: 1;
  padding-right: 1px;
}
.fields {
  flex: 1;
  display: flex;
  flex-direction: column;
  padding: 10px 13px 0 19px;
}
.fields label,
.caption {
  flex: none;
  height: 21px;
  line-height: 20px;
}
.caption {
  margin: 2px 0;
}
.field {
  flex: none;
  display: flex;
  align-items: center;
  gap: 11px;
}
.combo {
  flex: 1;
  position: relative;
}
.combo select {
  display: block;
  appearance: none;
  width: 100%;
  height: 24px;
  border: solid #fff;
  border-width: 2px 1px 1px 2px;
  border-top-color: #767676;
  border-left-color: #767676;
  border-radius: 0;
  background: #fff;
}
.combo-arrow {
  position: absolute;
  top: 2px;
  right: 1px;
  width: 16px;
  height: 20px;
  border-bottom: 2px solid #696969;
  background: #f0f0f0;
  pointer-events: none;
}
.combo-arrow::after {
  content: "";
  display: block;
  margin: 8px auto 0;
  width: 0;
  border: 5px solid transparent;
  border-top-color: #000;
  border-bottom: 0;
}
.sq {
  flex: none;
  display: flex;
  align-items: center;
  justify-content: center;
  width: 26px;
  height: 30px;
  border: 1px solid #adadad;
  background: #e1e1e1;
}
.sq.focus {
  border: 2px solid #0078d7;
}
.inputs {
  align-items: flex-start;
  margin-top: 11px;
}
.sqs {
  display: flex;
  flex-direction: column;
  gap: 8px;
  padding-top: 1px;
}
.datasets,
.fieldmap,
.fields input {
  flex: 1;
  min-width: 0;
  border: 1px solid #82878f;
  background: #fff;
  font-family: "Liberation Mono", "Noto Sans CJK SC", monospace;
  font-size: 14px;
}
.datasets {
  height: 200px;
  padding: 1px 2px 1px 1px;
  background: #fff repeating-linear-gradient(transparent 0 18px, #eee 18px 19px) content-box;
}
.datasets li {
  display: flex;
  align-items: center;
  gap: 1px;
  height: 19px;
  padding: 2px 0 0 3px;
}
.fields input {
  height: 24px;
  padding: 0 2px 2px;
  border-color: #7a7a7a;
}
.mapping {
  align-items: flex-start;
}
.mapping .sqs {
  gap: 17px;
}
.fieldmap {
  height: 190px;
  padding-left: 8px;
}
.fieldmap li {
  display: flex;
  align-items: center;
  height: 18px;
  background: linear-gradient(#999, #999) 5px 0 / 1px 100% no-repeat;
}
.fieldmap li:first-child {
  background-position: 5px 9px;
}
.fieldmap li:last-child {
  background-size: 1px 9px;
}
.fieldmap li svg {
  margin: 4px 5px 0 0;
}
.params .vscroll {
  width: 15px;
  padding: 15px 0;
}
.params .track {
  padding-top: 7px;
}
.params .thumb {
  height: 78%;
}
.help {
  flex: none;
  width: 346px;
  padding-right: 1px;
  background: #fff;
}
.help-text {
  flex: 1;
  padding: 3px 0 0 15px;
  font-size: 13px;
}
.help-text h2 {
  font-size: 17px;
  font-weight: bold;
  line-height: 26px;
  margin-bottom: 12px;
}
.help-text p {
  line-height: 20px;
}
.help .vscroll {
  width: 17px;
  padding: 15px 0;
  background: #f9f9f9;
  color: #c1c1c1;
}
.actions {
  flex: none;
  display: flex;
  align-items: center;
  gap: 7px;
  height: 53px;
  padding: 0 216px 5px 0;
  justify-content: flex-end;
}
.actions button {
  height: 26px;
  line-height: 22px;
  border: 1px solid #adadad;
  background: #e1e1e1;
}
.actions .ok {
  width: 87px;
  height: 28px;
  border: 2px solid #f01010;
}
.actions .cancel {
  width: 86px;
}
.actions .env {
  width: 103px;
}
.actions .hide-help {
  width: 112px;
}
.actions .tool-help {
  width: 117px;
  margin-left: 16px;
}

/* toolbox */
.toolbox {
  flex: none;
  width: 312px;
  display: flex;
  flex-direction: column;
}
.toolbox .panel-title {
  padding: 0 0 0 4px;
  margin-right: -5px;
}
.toolbox-body {
  flex: 1;
  min-height: 0;
  display: flex;
  border: solid #82878f;
  border-width: 1px 0 1px 1px;
  background: #fff;
}
.tools {
  flex: 1;
  padding-top: 1px;
  overflow: hidden;
}
.tools li {
  display: flex;
  align-items: center;
  height: 20px;
  padding-left: 8px;
}
.tools .set {
  padding-left: 27px;
}
.tools .tool {
  padding-left: 61px;
}
.tools .ex {
  width: 9px;
  height: 9px;
  margin-right: 6px;
}
.tools .ic {
  width: 16px;
  height: 16px;
}
.tools span {
  padding: 0 3px 0 5px;
  line-height: 18px;
}
.tools .marked {
  width: max-content;
  height: 22px;
  margin: -1px 0 -1px 53px;
  padding: 0 2px 0 6px;
  border: 2px solid #f01010;
}
.tools .marked span {
  margin-left: 3px;
  padding-left: 2px;
  background: #f0f0f0;
}
.toolbox .vscroll {
  width: 12px;
  padding: 6px 0 4px 2px;
}
.toolbox .track {
  margin-left: -2px;
  padding-top: 60px;
}
.toolbox .thumb {
  height: 77%;
}
.tabs {
  flex: none;
  display: flex;
  height: 13px;
  padding-left: 3px;
  overflow: hidden;
}
.tabs button {
  flex: none;
  display: flex;
  gap: 3px;
  height: 22px;
  padding: 1px 4px 0 4px;
  border-right: 1px solid #9a9a9a;
  line-height: 14px;
  color: #6d6d6d;
}
.tabs .current {
  width: 84px;
  background: #fff;
  color: #000;
}

.callout {
  position: absolute;
  top: 563px;
  right: 271px;
}
```
